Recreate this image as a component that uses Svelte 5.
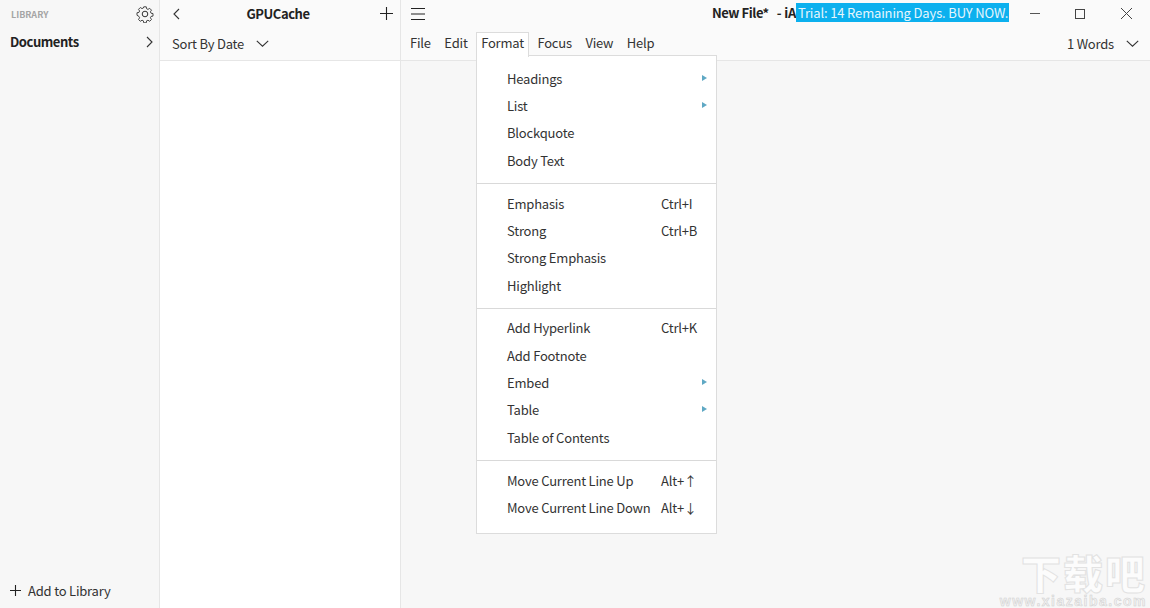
<script lang="ts">
    type Item = { label: string; shortcut?: string; sub?: boolean };

    const menuFiles = ["File", "Edit", "Format", "Focus", "View", "Help"];

    const groups: Item[][] = [
        [
            { label: "Headings", sub: true },
            { label: "List", sub: true },
            { label: "Blockquote" },
            { label: "Body Text" },
        ],
        [
            { label: "Emphasis", shortcut: "Ctrl+I" },
            { label: "Strong", shortcut: "Ctrl+B" },
            { label: "Strong Emphasis" },
            { label: "Highlight" },
        ],
        [
            { label: "Add Hyperlink", shortcut: "Ctrl+K" },
            { label: "Add Footnote" },
            { label: "Embed", sub: true },
            { label: "Table", sub: true },
            { label: "Table of Contents" },
        ],
        [
            { label: "Move Current Line Up", shortcut: "Alt+↑" },
            { label: "Move Current Line Down", shortcut: "Alt+↓" },
        ],
    ];
</script>

<div class="app">
    <aside class="library">
        <div class="lib-head">
            <span class="lib-title">LIBRARY</span>
            <svg class="gear" width="18" height="18" viewBox="0 0 18 18" fill="none" stroke="#333" stroke-width="1">
                <circle cx="9" cy="9" r="2.8" />
                <path d="M7.6 1h2.8l.4 2.2 1.5.7 1.9-1.2 2 2-1.2 1.9.7 1.5 2.2.4v2.8l-2.2.4-.7 1.5 1.2 1.9-2 2-1.9-1.2-1.5.7-.4 2.2H7.6l-.4-2.2-1.5-.7-1.9 1.2-2-2 1.2-1.9-.7-1.5L.1 10.4V7.6l2.2-.4.7-1.5-1.2-1.9 2-2 1.9 1.2 1.5-.7z" transform="translate(.9 .9) scale(.9)" />
            </svg>
        </div>
        <div class="lib-row">
            <span>Documents</span>
            <svg width="7" height="12" viewBox="0 0 7 12" fill="none" stroke="#333" stroke-width="1.1"><path d="M1 1l5 5-5 5" /></svg>
        </div>
        <div class="lib-add">
            <svg width="11" height="11" viewBox="0 0 11 11" stroke="#222" stroke-width="1.1"><path d="M5.5 0v11M0 5.5h11" /></svg>
            <span>Add to Library</span>
        </div>
    </aside>

    <section class="files">
        <header class="files-head">
            <div class="files-top">
                <svg width="7" height="12" viewBox="0 0 7 12" fill="none" stroke="#333" stroke-width="1.1"><path d="M6 1L1 6l5 5" /></svg>
                <strong>GPUCache</strong>
                <svg width="13" height="13" viewBox="0 0 13 13" stroke="#222" stroke-width="1.1"><path d="M6.5 0v13M0 6.5h13" /></svg>
            </div>
            <div class="files-sort">
                <span>Sort By Date</span>
                <svg width="13" height="7" viewBox="0 0 13 7" fill="none" stroke="#333" stroke-width="1.1"><path d="M.8.8l5.7 5.4L12.2.8" /></svg>
            </div>
        </header>
    </section>

    <main class="editor">
        <header class="editor-head">
            <div class="title-bar">
                <svg class="burger" width="14" height="12" viewBox="0 0 14 12" stroke="#222" stroke-width="1"><path d="M0 .5h14M0 6h14M0 11.5h14" /></svg>
                <div class="title">
                    <strong>New File*</strong>
                    <span class="app-name">- iA</span>
                    <span class="trial">Trial: 14 Remaining Days. BUY NOW.</span>
                </div>
                <div class="win">
                    <svg width="10" height="11" viewBox="0 0 10 11" stroke="#555"><path d="M0 5.5h10" /></svg>
                    <svg width="10" height="10" viewBox="0 0 10 10" fill="none" stroke="#444"><rect x=".5" y=".5" width="9" height="9" /></svg>
                    <svg class="close" width="11" height="11" viewBox="0 0 11 11" stroke="#444"><path d="M0 0l11 11M11 0L0 11" /></svg>
                </div>
            </div>
            <div class="menu-bar">
                <nav>
                    {#each menuFiles as name}
                        <span class="menu-name" class:open={name === "Format"}>{name}</span>
                    {/each}
                </nav>
                <div class="words">
                    <span>1 Words</span>
                    <svg width="13" height="7" viewBox="0 0 13 7" fill="none" stroke="#333" stroke-width="1.1"><path d="M.8.8l5.7 5.4L12.2.8" /></svg>
                </div>
            </div>
        </header>

        <div class="dropdown">
            {#each groups as group}
                <div class="group">
                    {#each group as item}
                        <div class="item">
                            <span>{item.label}</span>
                            {#if item.shortcut}<span class="shortcut">{item.shortcut}</span>{/if}
                            {#if item.sub}<i class="arrow"></i>{/if}
                        </div>
                    {/each}
                </div>
            {/each}
        </div>

        <div class="watermark" aria-hidden="true">
            <span class="wm-big">下载吧</span>
            <span class="wm-url">www.xiazaiba.com</span>
        </div>
    </main>
</div>

<style>
    :global(body) {
        margin: 0;
        background: #f7f7f7;
    }

    .app {
        display: flex;
        width: 1150px;
        height: 608px;
        overflow: hidden;
        font-family: "Noto Sans CJK SC", "Noto Sans", sans-serif;
        font-size: 13px;
        letter-spacing: -0.2px;
        color: #333;
    }

    strong {
        letter-spacing: -0.45px;
    }

    .library {
        width: 159px;
        flex: none;
        display: flex;
        flex-direction: column;
        background: #f7f7f7;
        border-right: 1px solid #e6e6e6;
    }

    .lib-head {
        display: flex;
        align-items: center;
        justify-content: space-between;
        height: 28px;
        padding: 0 5px 0 11px;
    }

    .lib-title {
        font-size: 9px;
        font-weight: 700;
        letter-spacing: 0;
        color: #a5a5a5;
    }

    .lib-row {
        display: flex;
        align-items: center;
        justify-content: space-between;
        height: 27px;
        padding: 0 6px 0 10px;
        font-weight: 700;
        letter-spacing: -0.45px;
        color: #222;
    }

    .lib-add {
        display: flex;
        align-items: center;
        gap: 7px;
        margin-top: auto;
        height: 35px;
        padding-left: 10px;
        box-sizing: border-box;
        padding-bottom: 1px;
    }

    .files {
        width: 240px;
        flex: none;
        background: #fff;
        border-right: 1px solid #e6e6e6;
    }

    .files-head {
        height: 60px;
        background: #fafafa;
        border-bottom: 1px solid #e6e6e6;
    }

    .files-top {
        display: flex;
        align-items: center;
        justify-content: space-between;
        height: 27px;
        padding: 0 7px 0 13px;
    }

    .files-top strong {
        color: #222;
        margin-right: 4px;
    }

    .files-sort {
        display: flex;
        align-items: center;
        gap: 12px;
        height: 33px;
        padding-left: 12px;
    }

    .editor {
        position: relative;
        flex: 1;
        background: #f7f7f7;
    }

    .editor-head {
        height: 60px;
        background: #fafafa;
        border-bottom: 1px solid #e6e6e6;
    }

    .title-bar {
        display: flex;
        align-items: center;
        height: 27px;
        padding-left: 10px;
    }

    .title {
        display: flex;
        align-items: center;
        margin-left: 287px;
        margin-bottom: 2px;
        color: #222;
        white-space: nowrap;
    }

    .app-name {
        margin-left: 8px;
        font-weight: 700;
    }

    .trial {
        height: 19px;
        line-height: 19px;
        padding: 0 1px 0 2px;
        background: #0cb0ee;
        color: #e6f6fd;
        letter-spacing: -0.15px;
    }

    .win {
        display: flex;
        align-items: center;
        gap: 35px;
        margin-left: auto;
        padding-right: 18px;
    }

    .win .close {
        margin-left: 1px;
    }

    .menu-bar {
        display: flex;
        align-items: flex-start;
        justify-content: space-between;
        height: 33px;
        padding: 5px 11px 0 4px;
        box-sizing: border-box;
    }

    nav {
        display: flex;
    }

    .menu-name {
        padding: 0 4px;
        line-height: 20px;
        margin-right: 3.5px;
        border: 1px solid transparent;
        border-bottom: 0;
    }

    .menu-name.open {
        position: relative;
        z-index: 2;
        background: #fff;
        border-color: #dcdcdc;
        height: 24px;
    }

    .words {
        display: flex;
        align-items: center;
        gap: 12px;
        height: 22px;
    }

    .dropdown {
        position: absolute;
        left: 75px;
        top: 55px;
        z-index: 1;
        width: 239px;
        background: #fff;
        border: 1px solid #dcdcdc;
    }

    .group {
        padding: 5.3px 0 9.3px;
        border-bottom: 1px solid #d9d9d9;
    }

    .group:first-child {
        padding-top: 8.5px;
    }

    .group:last-child {
        padding-bottom: 11.5px;
        border-bottom: 0;
    }

    .item {
        position: relative;
        display: flex;
        align-items: center;
        height: 27.33px;
        padding-left: 30px;
    }

    .shortcut {
        position: absolute;
        left: 184px;
    }

    .arrow {
        position: absolute;
        right: 9px;
        top: 10px;
        border-left: 5px solid #5fa8c4;
        border-top: 3.5px solid transparent;
        border-bottom: 3.5px solid transparent;
    }

    .watermark {
        position: absolute;
        right: 3px;
        bottom: 0;
        display: flex;
        flex-direction: column;
        align-items: flex-end;
        pointer-events: none;
    }

    .wm-big {
        font-size: 40px;
        line-height: 40px;
        height: 40px;
        margin-bottom: 2px;
        font-weight: 900;
        letter-spacing: 2px;
        color: #fcfcfc;
        -webkit-text-stroke: 1px #e2e2e2;
    }

    .wm-url {
        font-family: "Liberation Sans", sans-serif;
        font-size: 14px;
        line-height: 14px;
        height: 14px;
        font-weight: 700;
        letter-spacing: 1.5px;
        color: #f2f2f2;
        -webkit-text-stroke: 0.5px #cfcfcf;
    }
</style>
